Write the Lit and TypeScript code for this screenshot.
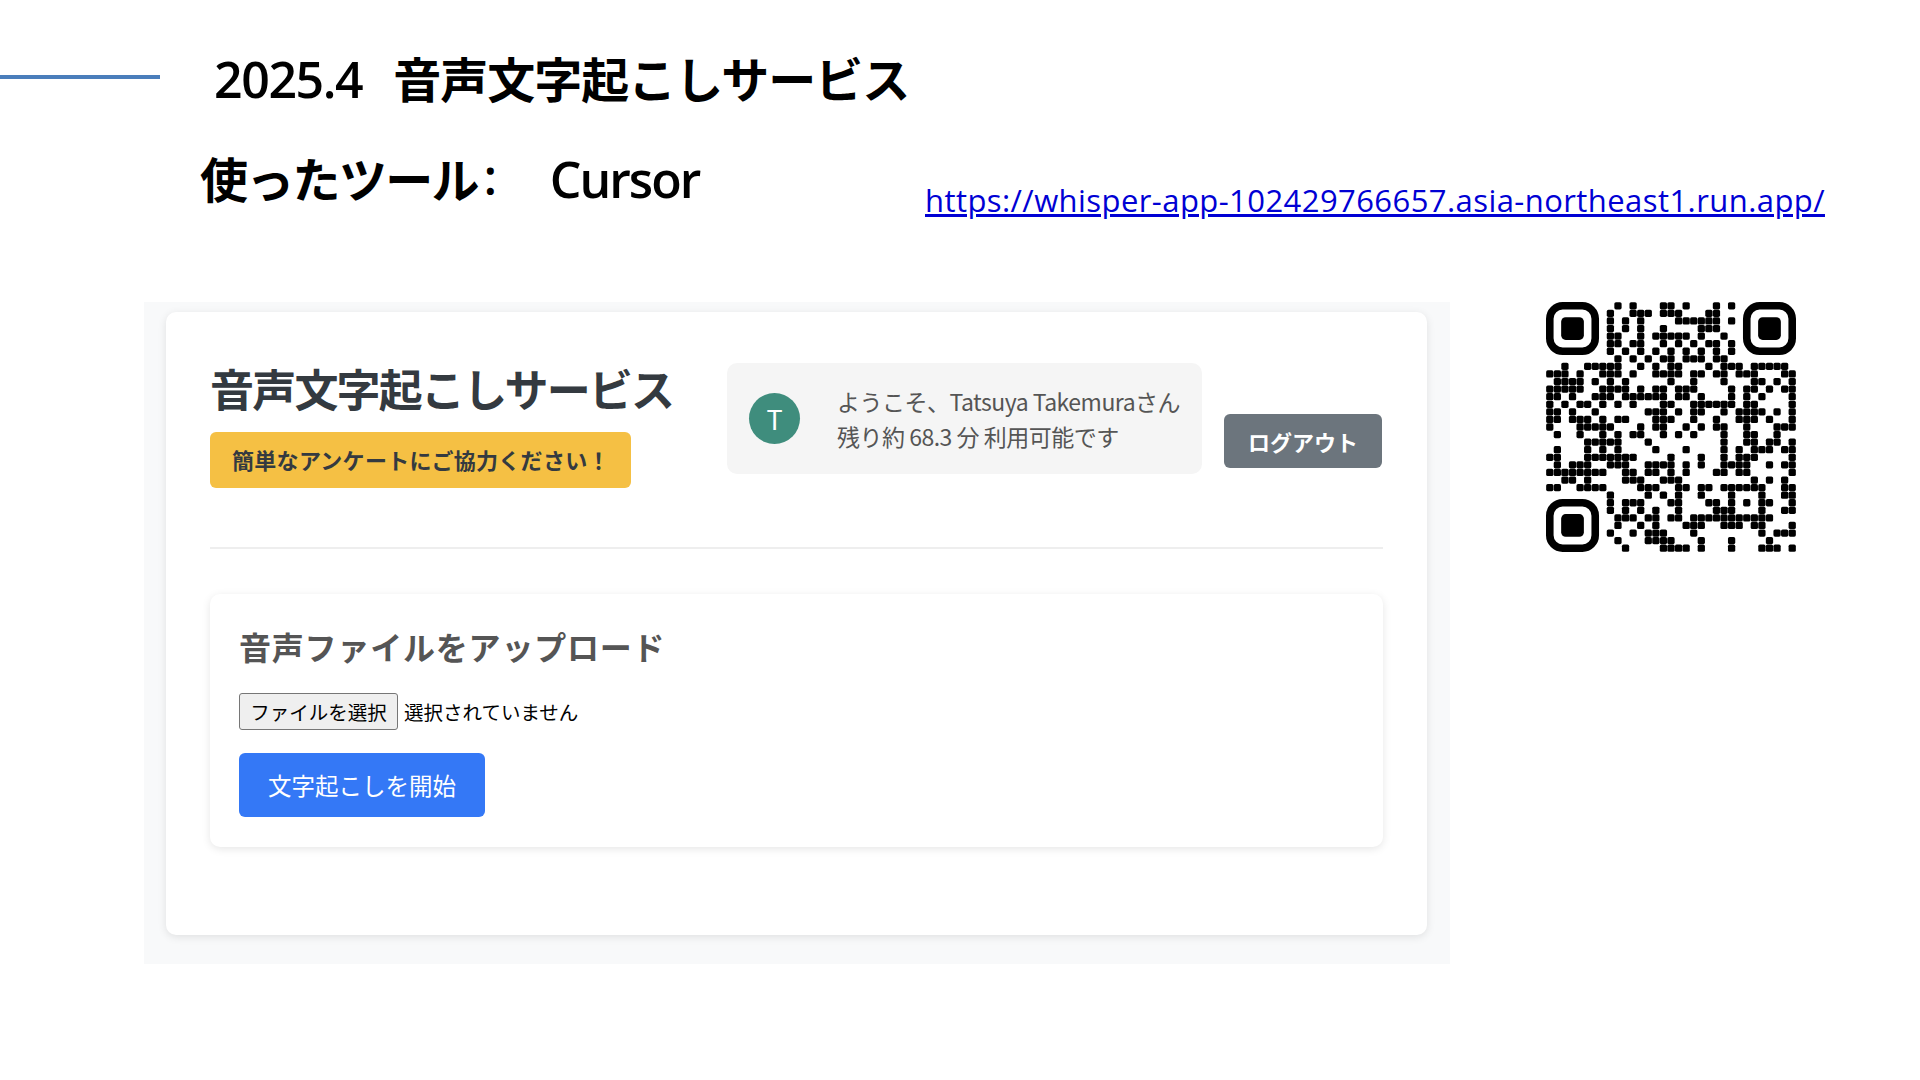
import { LitElement, html, css, svg } from "lit";
import { customElement } from "lit/decorators.js";

const rows: number[][] = [
  [9,11,15,16,18,22,24],
  [8,11,12,13,15,16,17,21,22],
  [8,10,12,17,18,19,20,21,22,24],
  [8,10,12,15,20,21,22],
  [8,9,12,14,15,16,17,18,20,23],
  [8,9,11,12,15,17,19,21,22,24],
  [8,10,12,14,16,18,20,22,24],
  [9,11,13,15,16,18,19,20,22,23],
  [2,5,6,7,8,9,12,14,16,17,21,23,24,25,27,28,29,30,31],
  [0,1,2,4,7,8,9,11,14,15,16,17,19,20,22,23,25,26,27,31,32],
  [1,2,3,4,6,8,10,16,19,23,27,28,30,32],
  [0,1,2,3,4,7,8,9,10,12,14,15,17,18,19,24,26,27,29,31,32],
  [0,1,3,6,7,8,10,11,12,13,14,15,17,18,20,24,26,28,32],
  [0,2,4,5,7,9,11,15,16,19,20,21,22,23,24,26,27,32],
  [0,1,3,6,13,14,15,17,19,20,23,25,26,27,28,30,32],
  [0,1,3,4,5,7,9,10,14,15,16,19,22,25,26,27,29,32],
  [0,4,5,6,7,8,12,14,15,18,20,22,23,26,30,31,32],
  [1,4,7,9,11,12,15,17,19,23,26,27,30],
  [5,6,7,8,9,13,23,26,27,29,30,32],
  [1,5,7,9,14,18,23,25,27,28,29,31,32],
  [0,1,5,6,7,8,9,10,11,16,20,23,25,26,27,32],
  [1,3,4,5,8,9,10,13,14,15,16,18,20,23,24,25,26,29,31,32],
  [0,1,2,3,4,5,6,7,10,11,13,14,16,18,22,23,25,26,32],
  [2,3,5,10,11,12,15,16,17,27,29,31],
  [0,1,4,5,6,7,12,13,14,17,18,20,21,23,24,25,26,27,28,31,32],
  [8,13,15,17,20,24,28,31,32],
  [8,10,11,12,16,17,21,22,24,26,28,29,32],
  [8,10,12,14,17,22,23,24,28,31,32],
  [9,10,11,13,14,16,17,19,20,21,22,23,24,25,26,27,28,29],
  [9,12,14,18,19,20,23,24,25,27,28,32],
  [8,11,13,14,15,19,28,30,31,32],
  [9,13,14,15,16,20,24,29],
  [10,15,16,17,18,20,24,28,29,30,32],
];

const finder = (x: number, y: number) => svg`
  <rect x=${x + 0.5} y=${y + 0.5} width="6" height="6" rx="1.7" fill="none" stroke="#000" stroke-width="1"></rect>
  <rect x=${x + 2} y=${y + 2} width="3" height="3" rx="0.6" fill="#000"></rect>`;

@customElement("app-root")
export class AppRoot extends LitElement {
  static styles = css`
    :host { display: block; }
    * { box-sizing: border-box; }
    .slide {
      width: 1920px; height: 1080px; background: #fff; overflow: hidden;
      font-family: "Noto Sans CJK JP", sans-serif; color: #000;
      padding-top: 50px;
    }
    .title-row { display: flex; align-items: center; height: 54px; }
    .rule { width: 160px; height: 4px; background: #4a7ebb; margin-right: 54px; }
    .title { display: flex; align-items: center; font-weight: 700; font-size: 48px; line-height: 54px; letter-spacing: -1px; white-space: nowrap; }
    .num { font-family: "Open Sans", sans-serif; font-weight: 600; font-size: 50px; letter-spacing: -1.4px; margin-right: 31px; padding-top: 3px; }
    .tool-row { display: flex; align-items: flex-start; height: 198px; padding-top: 46px; }
    .tool { margin-left: 200px; width: 725px; display: flex; align-items: center; font-size: 48px; line-height: 50px; font-weight: 700; letter-spacing: -1.7px; white-space: nowrap; }
    .colon { width: 72px; font-family: "Open Sans", sans-serif; font-weight: 600; padding-left: 6px; }
    .cursor { font-family: "Open Sans", sans-serif; font-weight: 600; font-size: 50px; letter-spacing: -2px; padding-top: 4px; }
    .link { margin-top: 30px; font-family: "Open Sans", sans-serif; font-size: 31px; line-height: 40px; color: #0000d4; text-decoration: underline; white-space: nowrap; letter-spacing: 0.43px; }
    .main { display: flex; align-items: flex-start; margin-left: 144px; }
    .shot { width: 1306px; height: 662px; background: #f8f9fa; padding: 10px 23px 0 22px; }
    .card { height: 623px; background: #fff; border-radius: 10px; box-shadow: 0 2px 8px rgba(0,0,0,.1); padding: 0 44px; }
    .head { display: flex; align-items: flex-start; height: 237px; border-bottom: 2px solid #eee; }
    .brand { width: 517px; padding-top: 46px; flex: none; }
    h1 { margin: 0 0 14px; font-size: 44px; line-height: 60px; font-weight: 700; color: #343a40; letter-spacing: -1.8px; white-space: nowrap; }
    .notice { width: 421px; height: 56px; border-radius: 6px; background: #f5c044; color: #343a40; font-weight: 700; font-size: 22px; display: flex; align-items: center; padding: 0 0 2px 22px; letter-spacing: 0.3px; white-space: nowrap; }
    .user { margin-top: 51px; width: 475px; height: 111px; flex: none; border-radius: 10px; background: #f5f5f5; display: flex; align-items: center; padding-left: 22px; }
    .avatar { width: 51px; height: 51px; border-radius: 50%; background: #3f8d7d; color: #fff; display: flex; align-items: center; justify-content: center; font-size: 27px; flex: none; margin-right: 37px; }
    .who { font-size: 23px; line-height: 35px; color: #555; white-space: nowrap; letter-spacing: -0.5px; }
    .logout { margin: 102px 0 0 22px; width: 158px; height: 54px; border-radius: 6px; background: #6c757d; color: #fff; font-weight: 700; font-size: 22px; display: flex; align-items: center; justify-content: center; }
    .upload { margin-top: 45px; height: 253px; border-radius: 10px; background: #fff; box-shadow: 0 2px 8px rgba(0,0,0,.1); padding: 28px 29px; }
    h2 { margin: 0 0 23px; font-size: 32px; line-height: 48px; font-weight: 700; color: #555; white-space: nowrap; letter-spacing: 0.8px; }
    .file { display: flex; align-items: center; gap: 6px; font-size: 19.5px; }
    .file-btn { width: 159px; height: 37px; border: 1px solid #767676; border-radius: 3px; background: #efefef; display: flex; align-items: center; justify-content: center; color: #000; white-space: nowrap; }
    .start { margin-top: 23px; width: 246px; height: 64px; border-radius: 6px; background: #3478f6; color: #fff; font-size: 23.5px; display: flex; align-items: center; justify-content: center; white-space: nowrap; }
    .qr { display: block; width: 250px; height: 250px; margin-left: 96px; }
  `;

  render() {
    const skip = (r: number, c: number) => (r < 7 && c < 7) || (r < 7 && c > 25) || (r > 25 && c < 7);
    return html`<div class="slide">
      <div class="title-row">
        <div class="rule"></div>
        <div class="title"><span class="num">2025.4</span><span>音声文字起こしサービス</span></div>
      </div>
      <div class="tool-row">
        <div class="tool"><span>使ったツール</span><span class="colon">:</span><span class="cursor">Cursor</span></div>
        <a class="link">https://whisper-app-102429766657.asia-northeast1.run.app/</a>
      </div>
      <div class="main">
        <div class="shot">
          <div class="card">
            <div class="head">
              <div class="brand">
                <h1>音声文字起こしサービス</h1>
                <div class="notice">簡単なアンケートにご協力ください！</div>
              </div>
              <div class="user">
                <div class="avatar">T</div>
                <div class="who">ようこそ、Tatsuya Takemuraさん<br />残り約 68.3 分 利用可能です</div>
              </div>
              <div class="logout">ログアウト</div>
            </div>
            <div class="upload">
              <h2>音声ファイルをアップロード</h2>
              <div class="file"><span class="file-btn">ファイルを選択</span><span>選択されていません</span></div>
              <div class="start">文字起こしを開始</div>
            </div>
          </div>
        </div>
        <svg class="qr" viewBox="0 0 33 33" aria-label="QR code">
          ${finder(0, 0)}${finder(26, 0)}${finder(0, 26)}
          ${rows.map((cols, r) => cols.filter((c) => !skip(r, c)).map((c) => svg`<rect x=${c + 0.02} y=${r + 0.02} width="0.96" height="0.96" rx="0.22" fill="#000"></rect>`))}
        </svg>
      </div>
    </div>`;
  }
}
